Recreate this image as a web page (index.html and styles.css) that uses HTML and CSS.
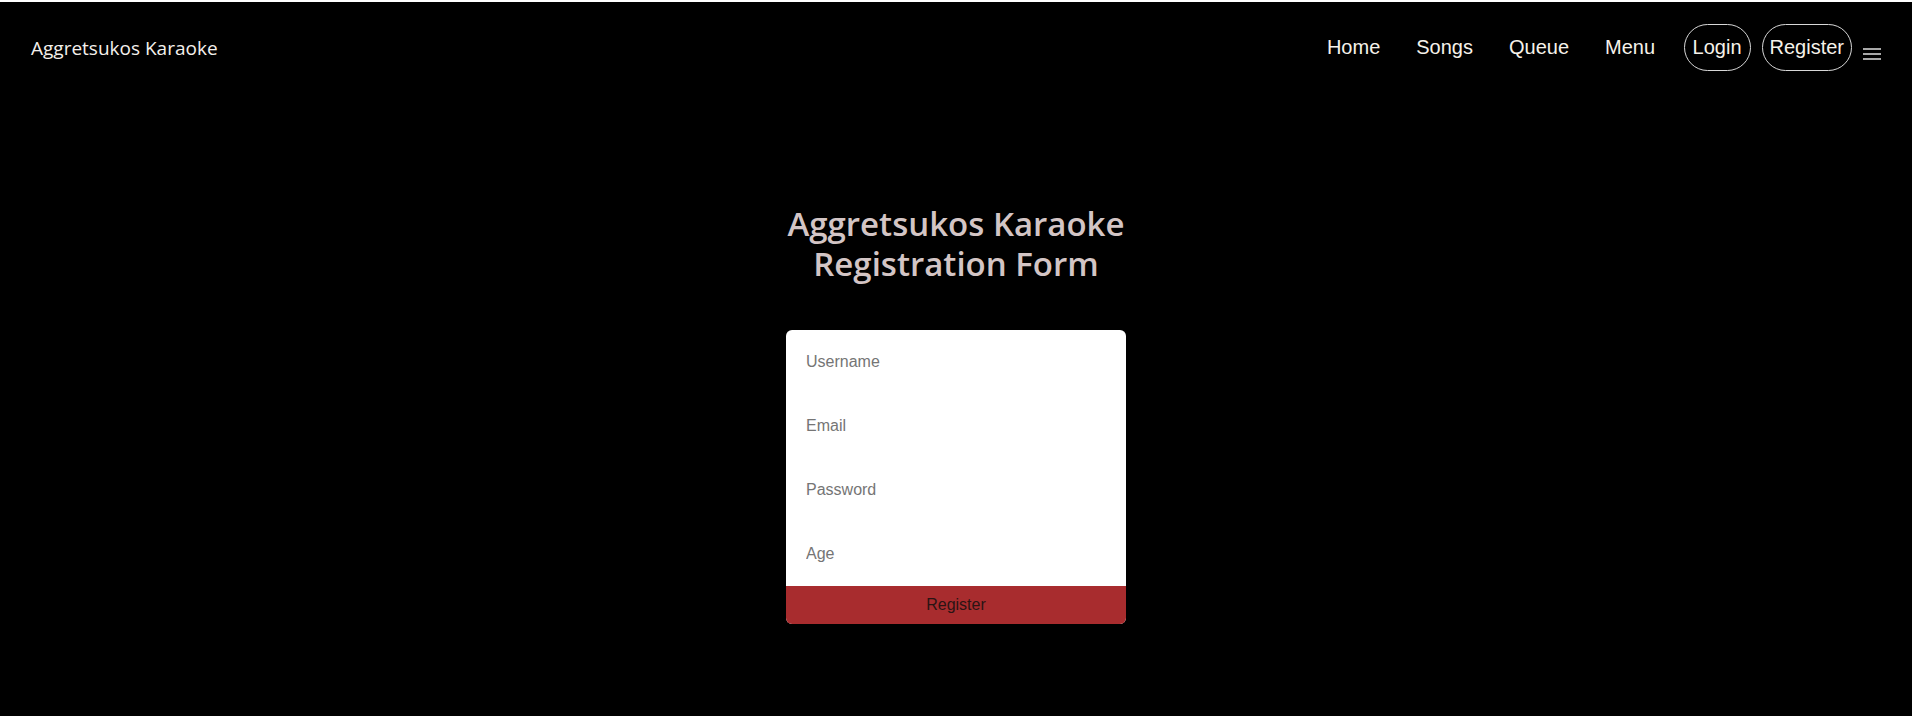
FILE: index.html
```html
<!DOCTYPE html>
<html lang="en">
<head>
<meta charset="utf-8">
<title>Aggretsukos Karaoke - Register</title>
<link rel="stylesheet" href="styles.css">
</head>
<body>
<div class="page">
  <header class="topbar">
    <a class="brand" href="#">Aggretsukos Karaoke</a>
    <nav class="nav">
      <a class="nav-link" href="#">Home</a>
      <a class="nav-link" href="#">Songs</a>
      <a class="nav-link" href="#">Queue</a>
      <a class="nav-link" href="#">Menu</a>
      <a class="pill pill-first" href="#">Login</a>
      <a class="pill" href="#">Register</a>
      <span class="burger" aria-hidden="true"><i></i><i></i><i></i></span>
    </nav>
  </header>
  <main class="main">
    <div class="form-wrap">
      <h1 class="title">Aggretsukos Karaoke Registration Form</h1>
      <form class="card">
        <input class="field" type="text" placeholder="Username">
        <input class="field" type="email" placeholder="Email">
        <input class="field" type="password" placeholder="Password">
        <input class="field" type="number" placeholder="Age">
        <button class="submit" type="button">Register</button>
      </form>
    </div>
  </main>
</div>
</body>
</html>
```

FILE: styles.css
```css
html {
  background: #ffffff;
}
body {
  margin: 0;
  background: #ffffff;
}
.page {
  margin-top: 2px;
  width: 1912px;
  height: 714px;
  background: #000000;
  display: flex;
  flex-direction: column;
}
.topbar {
  height: 90px;
  display: flex;
  align-items: center;
  justify-content: space-between;
  padding: 0 31px 0 31px;
}
.brand {
  font-family: "Open Sans", "Noto Sans", sans-serif;
  font-size: 19px;
  color: #f4f0ec;
  text-decoration: none;
  margin-top: 1px;
}
.nav {
  display: flex;
  align-items: center;
  gap: 11px;
}
.nav-link {
  font-family: "Liberation Sans", Arial, sans-serif;
  font-size: 20px;
  color: #f6f2ea;
  text-decoration: none;
  padding: 0 12.5px;
}
.pill {
  font-family: "Liberation Sans", Arial, sans-serif;
  font-size: 20px;
  line-height: 23px;
  color: #f6f2ea;
  text-decoration: none;
  padding: 11px 7px;
  border: 1px solid #d8d8d8;
  border-radius: 24px;
}
.pill-first {
  margin-left: 5px;
  padding: 11px 8px;
}
.burger {
  width: 18px;
  height: 12px;
  display: flex;
  flex-direction: column;
  justify-content: space-between;
  margin-top: 14px;
}
.burger i {
  display: block;
  height: 2px;
  background: #a8a8a8;
}
.main {
  display: flex;
  justify-content: center;
  padding-top: 112px;
}
.form-wrap {
  width: 340px;
  display: flex;
  flex-direction: column;
  align-items: center;
}
.title {
  margin: 0 0 46px;
  font-family: "Open Sans", "Noto Sans", sans-serif;
  font-weight: 600;
  font-size: 33px;
  line-height: 40px;
  color: #d3c5c5;
  text-align: center;
}
.card {
  width: 340px;
  margin: 0;
  background: #ffffff;
  border-radius: 6px;
  display: flex;
  flex-direction: column;
  overflow: hidden;
}
.field {
  height: 64px;
  box-sizing: border-box;
  border: none;
  outline: none;
  padding: 0 20px;
  margin: 0;
  font-family: "Liberation Sans", Arial, sans-serif;
  font-size: 16px;
  color: #333;
  background: transparent;
}
.field::placeholder {
  color: #757575;
}
.submit {
  height: 38px;
  border: none;
  margin: 0;
  background: #a82c2e;
  color: #2a1414;
  font-family: "Liberation Sans", Arial, sans-serif;
  font-size: 16px;
  cursor: pointer;
}
```
